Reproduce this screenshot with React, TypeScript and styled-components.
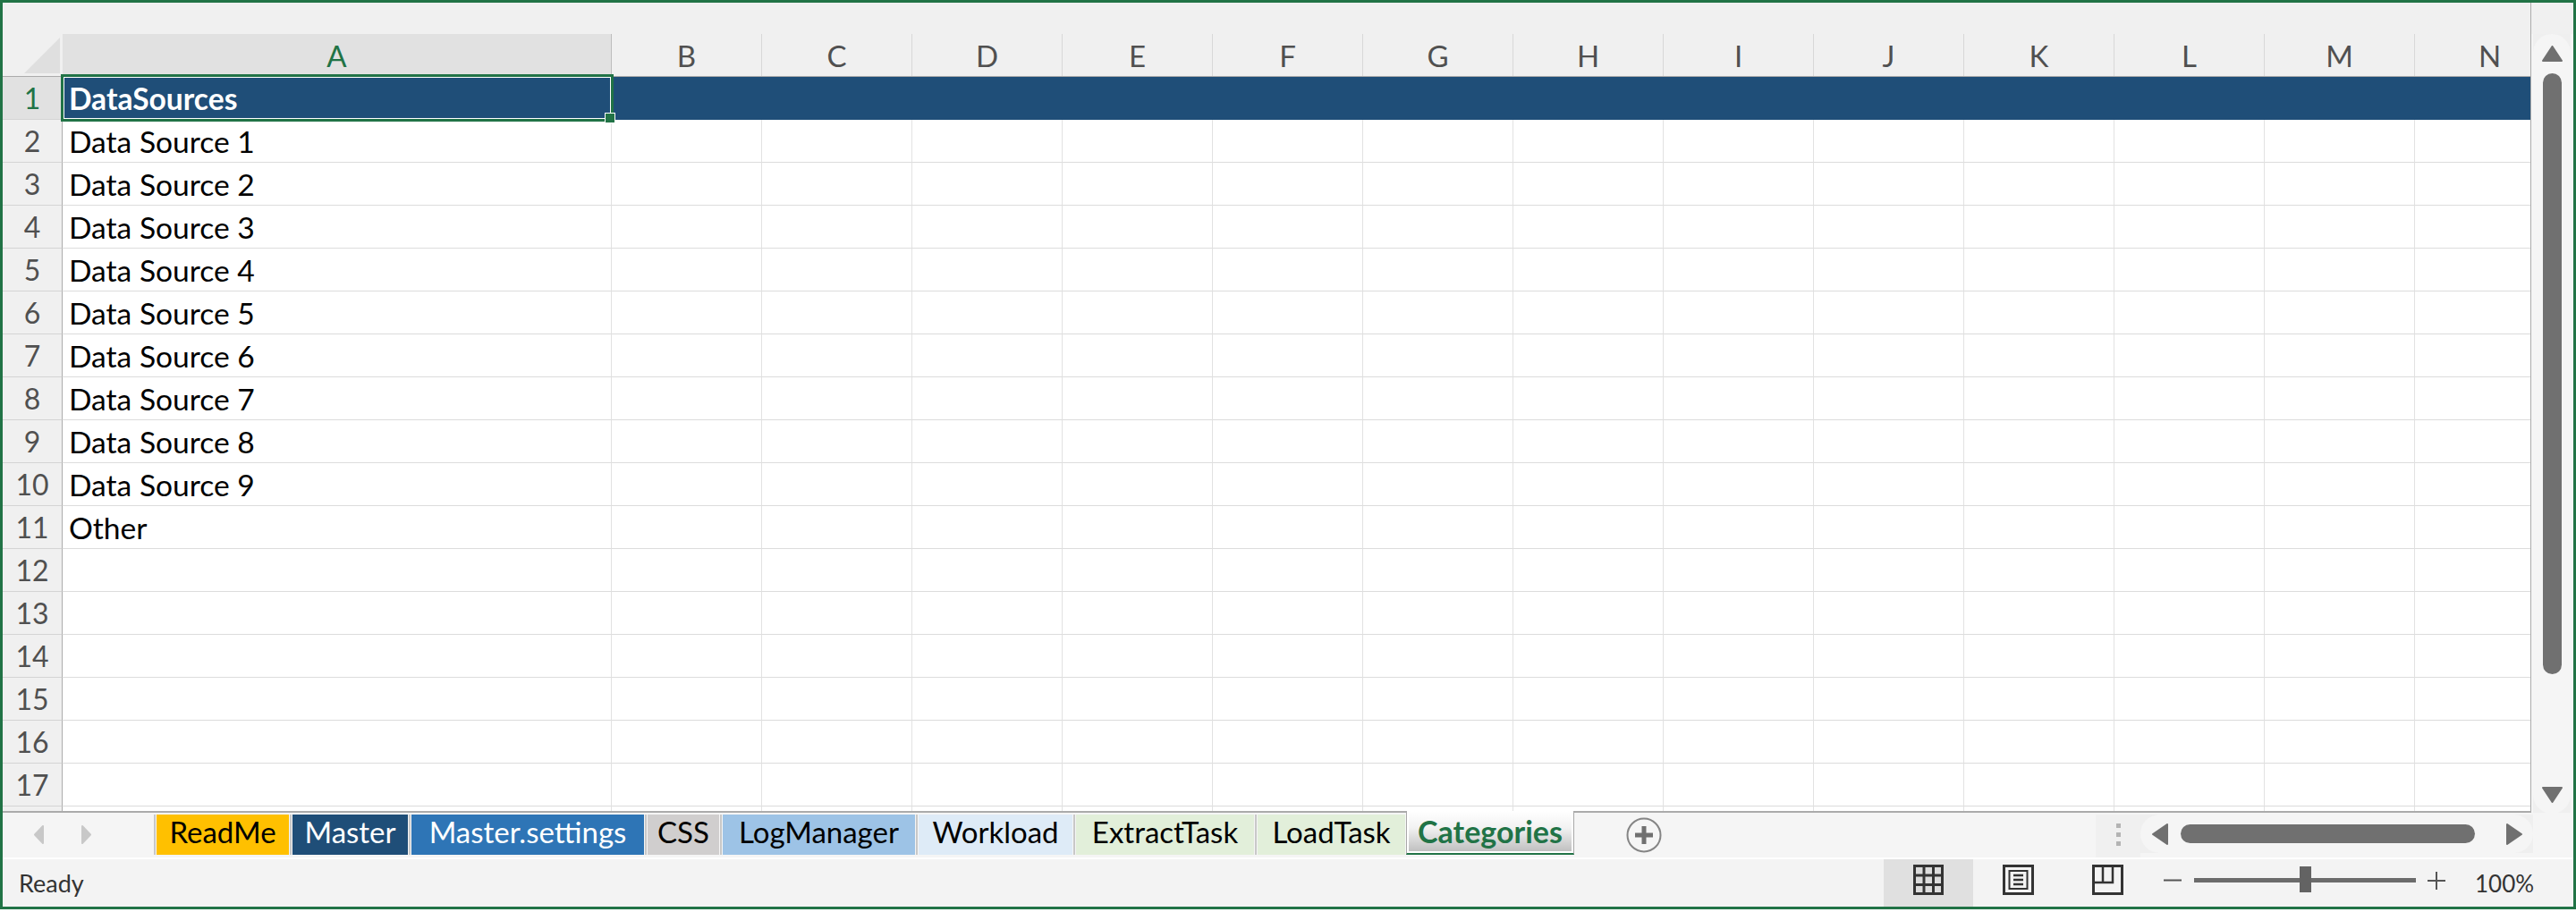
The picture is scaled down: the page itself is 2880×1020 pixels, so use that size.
import React from "react";
import styled, { createGlobalStyle } from "styled-components";

const COLUMNS = ["B", "C", "D", "E", "F", "G", "H", "I", "J", "K", "L", "M", "N"];
const ROWS = [
  "DataSources",
  "Data Source 1",
  "Data Source 2",
  "Data Source 3",
  "Data Source 4",
  "Data Source 5",
  "Data Source 6",
  "Data Source 7",
  "Data Source 8",
  "Data Source 9",
  "Other",
  "",
  "",
  "",
  "",
  "",
  "",
];

const TABS = [
  { name: "ReadMe", width: 148, bg: "#ffc000", fg: "#000" },
  { name: "Master", width: 129, bg: "#1f4e78", fg: "#fff" },
  { name: "Master.settings", width: 260, bg: "#2e75b6", fg: "#fff" },
  { name: "CSS", width: 80, bg: "#d0cece", fg: "#000" },
  { name: "LogManager", width: 215, bg: "#9dc3e6", fg: "#000" },
  { name: "Workload", width: 172, bg: "#deebf7", fg: "#000" },
  { name: "ExtractTask", width: 199, bg: "#e2efda", fg: "#000" },
  { name: "LoadTask", width: 165, bg: "#e2efda", fg: "#000" },
];

const GREEN = "#217346";
const FONT = `Lato, "Noto Sans", sans-serif`;

const GlobalStyle = createGlobalStyle`
  html, body {
    margin: 0;
    padding: 0;
    background: #fff;
  }
  * {
    box-sizing: border-box;
  }
`;

const Frame = styled.div`
  width: 2880px;
  height: 1017px;
  border: 3px solid ${GREEN};
  display: flex;
  flex-direction: column;
  font-family: ${FONT};
  overflow: hidden;
`;

const Main = styled.div`
  display: flex;
  height: 906px;
`;

const Sheet = styled.div`
  width: 2827px;
  border-right: 1px solid #ababab;
  border-bottom: 2px solid #ababab;
  display: flex;
  flex-direction: column;
  position: relative;
  overflow: hidden;
`;

const HeaderRow = styled.div`
  display: flex;
  flex: none;
  height: 83px;
  padding-top: 35px;
  background: #f0f0f0;
  border-bottom: 1px solid #ababab;
`;

const Corner = styled.div`
  width: 67px;
  flex: none;
  display: flex;
  align-items: flex-end;
  justify-content: flex-end;
  padding: 0 3px 3px 0;
`;

const ColumnHead = styled.div<{ $active?: boolean; $width: number }>`
  width: ${(p) => p.$width}px;
  flex: none;
  display: flex;
  align-items: center;
  justify-content: center;
  font-size: 33px;
  font-weight: 400;
  padding-top: 1px;
  color: ${(p) => (p.$active ? GREEN : "#505050")};
  background: ${(p) => (p.$active ? "#e1e1e1" : "transparent")};
  border-right: 1px solid ${(p) => (p.$active ? "#bdbdbd" : "#d8d8d8")};
`;

const GridRow = styled.div`
  display: flex;
  flex: none;
  height: 48px;
`;

const LastRow = styled(GridRow)`
  height: 6px;
`;

const RowHead = styled.div<{ $active?: boolean }>`
  width: 67px;
  flex: none;
  display: flex;
  align-items: center;
  justify-content: center;
  font-size: 32px;
  font-weight: 400;
  color: ${(p) => (p.$active ? GREEN : "#505050")};
  background: ${(p) => (p.$active ? "#e1e1e1" : "#f0f0f0")};
  border-right: 1px solid #ababab;
  border-bottom: 1px solid #d4d4d4;
`;

const Cell = styled.div<{ $filled?: boolean; $width: number }>`
  width: ${(p) => p.$width}px;
  flex: none;
  display: flex;
  align-items: center;
  padding-left: 7px;
  font-size: 33.6px;
  white-space: nowrap;
  color: ${(p) => (p.$filled ? "#fff" : "#000")};
  font-weight: ${(p) => (p.$filled ? 700 : 400)};
  background: ${(p) => (p.$filled ? "#1f4e78" : "#fff")};
  border-right: 1px solid ${(p) => (p.$filled ? "#1f4e78" : "#e2e2e2")};
  border-bottom: 1px solid ${(p) => (p.$filled ? "#1f4e78" : "#dcdcdc")};
`;

const Selection = styled.div`
  position: absolute;
  left: 65px;
  top: 80px;
  width: 618px;
  height: 53px;
  border: 3px solid ${GREEN};
  outline: 1px solid #fff;
  outline-offset: -4px;
`;

const FillHandle = styled.div`
  position: absolute;
  right: -4px;
  bottom: -4px;
  width: 10px;
  height: 10px;
  background: ${GREEN};
  outline: 1px solid #fff;
`;

const VScroll = styled.div`
  width: 47px;
  padding: 35px 3px 0 2px;
  background: linear-gradient(#f0f0f0 0 35px, #f5f5f5 35px);
`;

const VTrackBox = styled.div`
  height: 872px;
  background: #efefef;
`;

const VTrack = styled.div`
  height: 100%;
  background: #f5f5f5;
  border-radius: 21px;
  display: flex;
  flex-direction: column;
  align-items: center;
  padding-top: 13px;
`;

const VThumb = styled.div`
  width: 21px;
  height: 672px;
  margin-top: 13px;
  border-radius: 11px;
  background: #707070;
`;

const VSpacer = styled.div`
  flex: 1;
`;

const VDown = styled.div`
  height: 30px;
`;

const TabBar = styled.div`
  height: 50px;
  display: flex;
  background: #f5f5f5;
  position: relative;
`;

const TabNav = styled.div`
  width: 172px;
  flex: none;
  display: flex;
  align-items: flex-start;
  gap: 42px;
  padding: 14px 0 0 35px;
`;

const TabList = styled.div`
  display: flex;
  gap: 4px;
  padding-top: 2px;
  height: 49px;
`;

const Tab = styled.div<{ $bg: string; $fg: string; $width: number }>`
  width: ${(p) => p.$width}px;
  height: 45px;
  position: relative;
  display: flex;
  align-items: center;
  justify-content: center;
  padding-bottom: 7px;
  font-size: 33px;
  white-space: nowrap;
  background: ${(p) => p.$bg};
  color: ${(p) => p.$fg};

  &::before {
    content: "";
    position: absolute;
    left: -3px;
    top: 0;
    width: 2px;
    height: 45px;
    background: #c8c8c8;
  }
`;

const ActiveTab = styled.div`
  width: 188px;
  height: 49px;
  margin: -2px 0 0 1px;
  display: flex;
  align-items: center;
  justify-content: center;
  padding-bottom: 3px;
  font-size: 34px;
  font-weight: 700;
  white-space: nowrap;
  color: ${GREEN};
  background: linear-gradient(#fff 0%, #f2f2f2 40%, #bcbcbc 100%);
  box-shadow: inset 2px 0 0 #fff, inset -2px 0 0 #fff, inset 0 -2px 0 #fff;
  border-left: 1px solid #a8a8a8;
  border-right: 1px solid #a8a8a8;
  border-bottom: 2px solid ${GREEN};
`;

const AddSheet = styled.div`
  width: 40px;
  height: 40px;
  margin: 5px 0 0 58px;
  flex: none;
`;

const TabSpacer = styled.div`
  flex: 1;
`;

const Splitter = styled.div`
  width: 50px;
  height: 48px;
  margin-top: 2px;
  background: #f0f0f0;
  display: flex;
  flex-direction: column;
  align-items: center;
  gap: 5px;
  padding-top: 10px;
`;

const SplitterDot = styled.span`
  width: 5px;
  height: 5px;
  background: #b4b4b4;
`;

const HTrackBox = styled.div`
  width: 439px;
  height: 43px;
  margin: 2px 45px 0 0;
  background: #efefef;
`;

const HTrack = styled.div`
  height: 100%;
  background: #f5f5f5;
  border-radius: 22px;
  display: flex;
  align-items: center;
  padding: 0 12px 0 13px;
  justify-content: space-between;
`;

const HThumb = styled.div`
  width: 329px;
  height: 21px;
  margin-right: 22px;
  background: #707070;
  border-radius: 11px;
`;

const WhiteLine = styled.div`
  height: 2px;
  background: #fff;
`;

const StatusBar = styled.div`
  height: 53px;
  background: #f3f3f3;
  display: flex;
  align-items: stretch;
`;

const Ready = styled.div`
  font-size: 27px;
  color: #333;
  padding: 0 0 0 18px;
  display: flex;
  align-items: center;
`;

const StatusSpacer = styled.div`
  flex: 1;
`;

const ViewButton = styled.div<{ $active?: boolean }>`
  width: 100px;
  display: flex;
  align-items: center;
  justify-content: center;
  padding-bottom: 7px;
  background: ${(p) => (p.$active ? "#e0e0e0" : "transparent")};
`;

const ZoomArea = styled.div`
  display: flex;
  align-items: center;
  width: 471px;
  padding: 0 0 0 13px;
`;

const Slider = styled.div`
  width: 248px;
  height: 5px;
  margin: -6px 13px 0 14px;
  background: #6b6b6b;
  position: relative;
`;

const SliderHandle = styled.div`
  position: absolute;
  left: 118px;
  top: -13px;
  width: 13px;
  height: 29px;
  background: #636363;
`;

const ZoomIcon = styled.svg`
  flex: none;
  margin-top: -6px;
`;

const ZoomValue = styled.div`
  font-size: 26px;
  color: #333;
  margin-left: 33px;
`;

const Triangle: React.FC<{ dir: "up" | "down" | "left" | "right"; color: string; w: number; h: number }> = ({
  dir,
  color,
  w,
  h,
}) => {
  const points = {
    up: `${w / 2},1 ${w - 1},${h - 1} 1,${h - 1}`,
    down: `1,1 ${w - 1},1 ${w / 2},${h - 1}`,
    left: `${w - 1},1 ${w - 1},${h - 1} 1,${h / 2}`,
    right: `1,1 ${w - 1},${h / 2} 1,${h - 1}`,
  }[dir];
  return (
    <svg width={w} height={h} viewBox={`0 0 ${w} ${h}`}>
      <polygon points={points} fill={color} stroke={color} strokeWidth="2" strokeLinejoin="round" />
    </svg>
  );
};

export default function App() {
  return (
    <Frame>
      <GlobalStyle />
      <Main>
        <Sheet>
          <HeaderRow>
            <Corner>
              <svg width="40" height="40" viewBox="0 0 40 40">
                <polygon points="40,0 40,40 0,40" fill="#dfdfdf" />
              </svg>
            </Corner>
            <ColumnHead $active $width={614}>
              A
            </ColumnHead>
            {COLUMNS.map((c) => (
              <ColumnHead key={c} $width={168}>
                {c}
              </ColumnHead>
            ))}
          </HeaderRow>
          {ROWS.map((text, r) => (
            <GridRow key={r}>
              <RowHead $active={r === 0}>{r + 1}</RowHead>
              <Cell $width={614} $filled={r === 0}>
                {text}
              </Cell>
              {COLUMNS.map((c) => (
                <Cell key={c} $width={168} $filled={r === 0} />
              ))}
            </GridRow>
          ))}
          <LastRow>
            <RowHead />
            <Cell $width={614} />
            {COLUMNS.map((c) => (
              <Cell key={c} $width={168} />
            ))}
          </LastRow>
          <Selection>
            <FillHandle />
          </Selection>
        </Sheet>
        <VScroll>
          <VTrackBox>
            <VTrack>
              <Triangle dir="up" color="#707070" w={23} h={18} />
              <VThumb />
              <VSpacer />
              <VDown>
                <Triangle dir="down" color="#707070" w={23} h={18} />
              </VDown>
            </VTrack>
          </VTrackBox>
        </VScroll>
      </Main>
      <TabBar>
        <TabNav>
          <Triangle dir="left" color="#c8c8c8" w={11} h={21} />
          <Triangle dir="right" color="#c8c8c8" w={11} h={21} />
        </TabNav>
        <TabList>
          {TABS.map((t) => (
            <Tab key={t.name} $bg={t.bg} $fg={t.fg} $width={t.width}>
              {t.name}
            </Tab>
          ))}
        </TabList>
        <ActiveTab>Categories</ActiveTab>
        <AddSheet>
          <svg width="40" height="40" viewBox="0 0 40 40">
            <circle cx="20" cy="20" r="18.5" fill="none" stroke="#858585" strokeWidth="2" />
            <path d="M20 10v20M10 20h20" stroke="#707070" strokeWidth="5" />
          </svg>
        </AddSheet>
        <TabSpacer />
        <Splitter>
          <SplitterDot />
          <SplitterDot />
          <SplitterDot />
        </Splitter>
        <HTrackBox>
          <HTrack>
            <Triangle dir="left" color="#707070" w={18} h={24} />
            <HThumb />
            <Triangle dir="right" color="#707070" w={18} h={24} />
          </HTrack>
        </HTrackBox>
      </TabBar>
      <WhiteLine />
      <StatusBar>
        <Ready>Ready</Ready>
        <StatusSpacer />
        <ViewButton $active>
          <svg width="34" height="34" viewBox="0 0 34 34">
            <path
              d="M1.5 1.5h31v31h-31zM12 1.5v31M22.5 1.5v31M1.5 12h31M1.5 22.5h31"
              fill="#dcdcdc"
              stroke="#333"
              strokeWidth="3"
            />
          </svg>
        </ViewButton>
        <ViewButton>
          <svg width="35" height="34" viewBox="0 0 35 34">
            <path d="M1.5 1.5h32v31h-32z" fill="none" stroke="#333" strokeWidth="3" />
            <path d="M7.5 7h20v20h-20z" fill="none" stroke="#333" strokeWidth="2" />
            <path d="M12 12h11M12 17h11M12 22h11" stroke="#333" strokeWidth="2.5" />
          </svg>
        </ViewButton>
        <ViewButton>
          <svg width="35" height="34" viewBox="0 0 35 34">
            <path d="M1.5 1.5h32v31h-32z" fill="none" stroke="#333" strokeWidth="3" />
            <path d="M1.5 20h21.5V1.5M12 1.5V20" fill="none" stroke="#333" strokeWidth="2.5" />
          </svg>
        </ViewButton>
        <ZoomArea>
          <ZoomIcon width="20" height="3" viewBox="0 0 20 3">
            <path d="M0 1.5h20" stroke="#555" strokeWidth="2" />
          </ZoomIcon>
          <Slider>
            <SliderHandle />
          </Slider>
          <ZoomIcon width="20" height="20" viewBox="0 0 20 20">
            <path d="M0 10h20M10 0v20" stroke="#555" strokeWidth="2" />
          </ZoomIcon>
          <ZoomValue>100%</ZoomValue>
        </ZoomArea>
      </StatusBar>
    </Frame>
  );
}
